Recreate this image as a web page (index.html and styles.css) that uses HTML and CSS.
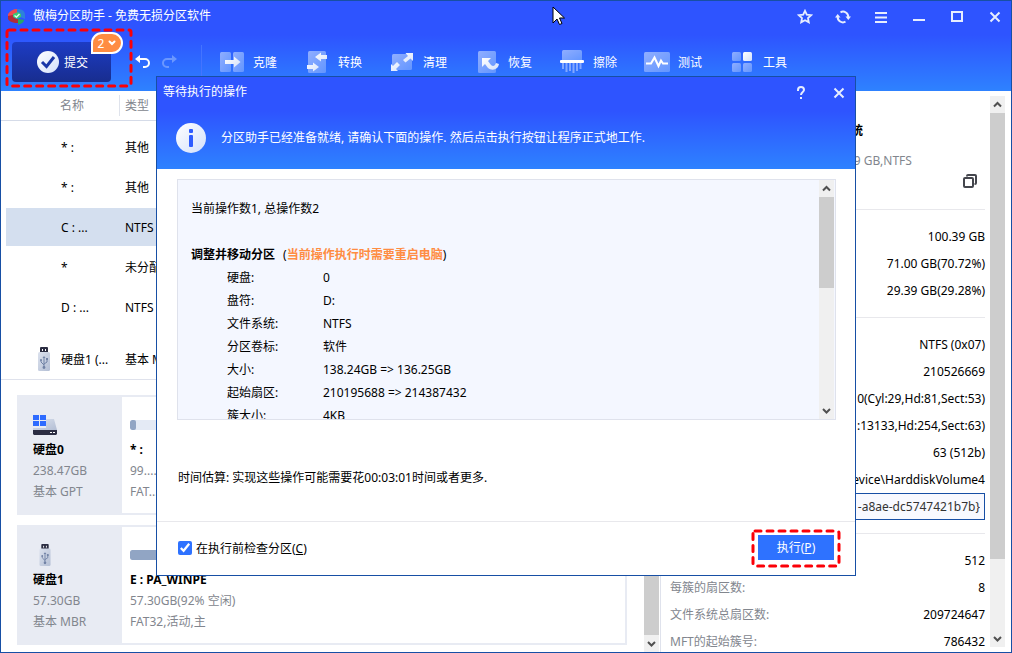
FILE: index.html
```html
<!DOCTYPE html>
<html lang="zh-CN">
<head>
<meta charset="utf-8">
<title>傲梅分区助手 - 免费无损分区软件</title>
<link rel="stylesheet" href="styles.css">
</head>
<body>
<svg class="defs" width="0" height="0" aria-hidden="true">
  <defs>
    <linearGradient id="pane" x1="0" y1="0" x2="1" y2="1"><stop offset="0" stop-color="#90aeff"/><stop offset="1" stop-color="#6295ff"/></linearGradient>
    <linearGradient id="shine" x1="0" y1="0" x2="1" y2="1"><stop offset="0" stop-color="#fff"/><stop offset="1" stop-color="#d3e0fb"/></linearGradient>
    <linearGradient id="stick" x1="0" y1="0" x2="1" y2="1"><stop offset="0" stop-color="#dce2ee"/><stop offset="1" stop-color="#b3bed4"/></linearGradient>
    <symbol id="usb" viewBox="0 0 14 26">
      <rect x="3" y="1" width="8" height="6" rx="1" fill="#2b2d42"/>
      <rect x="5" y="3" width="1" height="2" fill="#fff"/><rect x="8" y="3" width="1" height="2" fill="#fff"/>
      <rect x="1" y="6" width="12" height="19" rx="1.5" fill="url(#stick)"/>
      <path d="M7 11v10M4 14v2l3 3M10 13v3l-3 2" fill="none" stroke="#7182a5"/>
      <path d="M7 10l-1.5 2h3z" fill="#7182a5"/><circle cx="7" cy="21.500" r="1.400" fill="#7182a5"/><circle cx="4" cy="14" r="1" fill="#7182a5"/><rect x="9" y="12" width="2" height="2" fill="#7182a5"/>
    </symbol>
    <symbol id="close" viewBox="0 0 16 16"><path d="M3.500 3.500l9 9M12.500 3.500l-9 9" fill="none" stroke="#e6edff" stroke-width="2"/></symbol>
    <symbol id="up" viewBox="0 0 15 17"><path d="M4 10.500L7.500 7l3.500 3.500" fill="none" stroke="#505050" stroke-width="2"/></symbol>
    <symbol id="down" viewBox="0 0 15 17"><path d="M4 7l3.500 3.500L11 7" fill="none" stroke="#505050" stroke-width="2"/></symbol>
  </defs>
</svg>
<div class="window">
  <header class="head">
    <div class="titlebar">
      <svg class="logo" width="20" height="18" viewBox="0 0 20 18" aria-hidden="true">
        <path d="M1 9V6C3 3 6 1 10 1v4L7 7z" fill="#ef4a50"/><path d="M10 1c5 0 8 2 8 6v4l-5-2V6l-3-1z" fill="#2d80dc"/>
        <path d="M1 8l5-1c1 3 3 4 5 4v4C5 15 2 13 1 11z" fill="#b32b38"/>
        <path d="M11 11l6 1c0 2-3 4-6 5z" fill="#25a866"/><path d="M6 6l5-2 3 2v3l-4 2-4-2z" fill="#37c777"/><path d="M7.500 7.500l2 1.500 3-3" fill="none" stroke="#d9ffe9" stroke-width="1.500"/>
      </svg>
      <h1 class="title">傲梅分区助手 - 免费无损分区软件</h1>
      <div class="controls">
        <button class="control" aria-label="收藏"><svg width="16" height="16" viewBox="0 0 16 16"><path d="M8 1.800l1.800 3.900 4.300.5-3.100 2.900.8 4.300L8 11.300l-3.800 2.100.8-4.300-3.100-2.900 4.300-.5z" fill="none" stroke="#e6edff" stroke-width="1.800"/></svg></button>
        <button class="control" aria-label="刷新"><svg width="16" height="16" viewBox="0 0 16 16"><path d="M5.500 3.300a5.300 5.300 0 0 1 7.800 5M10.500 12.700a5.300 5.300 0 0 1-7.800-5" fill="none" stroke="#e6edff" stroke-width="2"/><path d="M10.500 7.500H16L13.300 11zM0 8.500h5.500L2.700 5z" fill="#e6edff"/></svg></button>
        <button class="control" aria-label="菜单"><svg width="16" height="16" viewBox="0 0 16 16"><path d="M2 4h12M2 8.500h12M2 13h12" stroke="#e6edff" stroke-width="2"/></svg></button>
        <button class="control" aria-label="最小化"><svg width="16" height="16" viewBox="0 0 16 16"><path d="M2 11h12" stroke="#e6edff" stroke-width="2"/></svg></button>
        <button class="control" aria-label="最大化"><svg width="16" height="16" viewBox="0 0 16 16"><rect x="3" y="3" width="10" height="9" fill="none" stroke="#e6edff" stroke-width="2"/></svg></button>
        <button class="control" aria-label="关闭"><svg width="16" height="16"><use href="#close"/></svg></button>
      </div>
    </div>
    <div class="toolbar">
      <div class="submit-wrap">
        <button class="submit"><svg width="24" height="24" viewBox="0 0 24 24" aria-hidden="true"><circle cx="12" cy="12" r="11" fill="url(#shine)"/><path d="M6 12l4.500 4.500L18 7" fill="none" stroke="#1a37a8" stroke-width="3"/></svg>提交</button>
        <button class="badge">2<svg width="8" height="6" viewBox="0 0 8 6" aria-hidden="true"><path d="M1.500 1.500L4 4l2.500-2.500" fill="none" stroke="#fff" stroke-width="2" stroke-linecap="round"/></svg></button>
        <svg class="mark mark-submit" width="128" height="60" aria-hidden="true"><rect x="2" y="2" width="124" height="56" rx="2"/></svg>
      </div>
      <button class="history" aria-label="撤销"><svg width="16" height="16" viewBox="0 0 16 16"><path d="M2 5h8a4 4 0 0 1 0 8H8" fill="none" stroke="#fff" stroke-width="2"/><path d="M0 5l5-4v8z" fill="#fff"/></svg></button>
      <button class="history" aria-label="重做" disabled><svg width="16" height="16" viewBox="0 0 16 16"><path d="M14 5H6a4 4 0 0 0 0 8h2" fill="none" stroke="#6a97ff" stroke-width="2"/><path d="M16 5l-5-4v8z" fill="#6a97ff"/></svg></button>
      <nav class="tools">
        <button class="tool"><svg width="26" height="26" viewBox="0 0 26 26"><rect x="1" y="3" width="11" height="20" rx="1.500" fill="url(#pane)"/><rect x="14" y="3" width="11" height="20" rx="1.500" fill="url(#pane)"/><path d="M6 11h9V7.500l6.500 5.500-6.500 5.500V15H6z" fill="url(#shine)"/></svg>克隆</button>
        <button class="tool"><svg width="26" height="26" viewBox="0 0 26 26"><rect x="4" y="2" width="18" height="22" rx="1.500" fill="url(#pane)"/><path d="M23 6h-6V3.500L11 8l6 4.500V10h6zM3 16h6v-2.500l6 4.500-6 4.500V20H3z" fill="url(#shine)"/></svg>转换</button>
        <button class="tool"><svg width="26" height="26" viewBox="0 0 26 26"><rect x="3" y="5" width="20" height="16" rx="1.500" fill="url(#pane)"/><path d="M24 4v8l-2.500-2.500-5 4-2.500-2.500 5-4L16.500 4zM2 22v-7l2 2 4-4 3 3-4 4 2 2z" fill="url(#shine)"/></svg>清理</button>
        <button class="tool"><svg width="26" height="26" viewBox="0 0 26 26"><rect x="4" y="2" width="18" height="22" rx="1.500" fill="url(#pane)"/><path d="M8 9h9l-3 3 3 4c2 2 4 1 5-2l3 1c-1 6-7 7-11 4l-3-4-3 3z" fill="url(#shine)"/></svg>恢复</button>
        <button class="tool"><svg width="26" height="26" viewBox="0 0 26 26"><rect x="3" y="1" width="20" height="11" rx="1.500" fill="url(#pane)"/><path d="M4 14v6M7.500 14v9M11 14v8M14.500 14v10M18 14v8M21.500 14v6" stroke="#82a7ff" stroke-width="2"/><rect x="1" y="11" width="24" height="3" rx="1" fill="#fff"/></svg>擦除</button>
        <button class="tool"><svg width="26" height="26" viewBox="0 0 26 26"><rect x="0" y="3" width="26" height="20" rx="1.500" fill="url(#pane)"/><path d="M2 14.500h5l3.500-6 4 8.500 2.500-5.500 2 3h5" fill="none" stroke="#fff" stroke-width="2"/></svg>测试</button>
        <button class="tool"><svg width="26" height="26" viewBox="0 0 26 26"><rect x="3" y="3" width="9" height="9" rx="1.500" fill="url(#pane)"/><rect x="14" y="3" width="9" height="9" rx="1.500" fill="url(#shine)"/><rect x="3" y="14" width="9" height="9" rx="1.500" fill="url(#pane)"/><rect x="14" y="14" width="9" height="9" rx="1.500" fill="url(#pane)"/></svg>工具</button>
      </nav>
    </div>
  </header>

  <main class="body">
    <section class="volumes">
      <div class="list">
        <table class="grid">
          <colgroup><col class="c-name"><col></colgroup>
          <thead><tr><th scope="col"><span class="th-name">名称</span></th><th scope="col">类型</th></tr></thead>
          <tbody>
            <tr><td>* :</td><td>其他</td></tr>
            <tr><td>* :</td><td>其他</td></tr>
            <tr class="selected"><td>C : ...</td><td>NTFS</td></tr>
            <tr><td>*</td><td>未分配</td></tr>
            <tr><td>D : ...</td><td>NTFS</td></tr>
          </tbody>
          <tbody class="disk-group"><tr><td><span class="disk-cell"><svg width="14" height="26" aria-hidden="true"><use href="#usb"/></svg>硬盘1 (...</span></td><td>基本 MBR</td></tr></tbody>
        </table>
      </div>
      <div class="disks">
        <div class="cards">
          <article class="card">
            <div class="disk">
              <svg class="disk-icon" width="24" height="24" viewBox="0 0 24 24" aria-hidden="true"><path d="M13 6h8l3 11H0v-2h13z" fill="url(#stick)"/><path d="M0 17h24v4l-1 1H1l-1-1z" fill="#2b2d42"/><path d="M17 19.500h2M20 19.500h2" stroke="#fff"/><path d="M0 2h6v5H0zM7 2h6v5H7zM0 8h6v5H0zM7 8h6v5H7z" fill="#2e6bff"/></svg>
              <h2 class="name">硬盘0</h2><p>238.47GB</p><p>基本 GPT</p>
            </div>
            <div class="part part-small"><div class="bar"><div class="used" style="width:22%"></div></div><h3 class="name">* :</h3><p>99....</p><p>FAT...</p></div>
          </article>
          <article class="card">
            <div class="disk">
              <svg class="disk-icon usb" width="14" height="26" aria-hidden="true"><use href="#usb"/></svg>
              <h2 class="name">硬盘1</h2><p>57.30GB</p><p>基本 MBR</p>
            </div>
            <div class="part"><div class="bar"><div class="used" style="width:8%"></div></div><h3 class="name">E : PA_WINPE</h3><p>57.30GB(92% 空闲)</p><p>FAT32,活动,主</p></div>
          </article>
        </div>
        <div class="scroll"><svg width="15" height="17"><use href="#up"/></svg><div class="thumb thumb-full"></div><svg width="15" height="17"><use href="#down"/></svg></div>
      </div>
    </section>

    <aside class="side">
      <div class="details">
        <div class="summary"><strong>系统</strong><span>100.39 GB,NTFS</span></div>
        <div class="copy-row"><button class="copy" aria-label="复制"><svg width="16" height="16" viewBox="0 0 16 16"><rect x="2" y="5" width="9" height="9" rx="1" fill="none" stroke="#44464d" stroke-width="2"/><path d="M5 3.500V3a1 1 0 0 1 1-1h7a1 1 0 0 1 1 1v7a1 1 0 0 1-1 1h-.5" fill="none" stroke="#44464d" stroke-width="2"/></svg></button></div>
        <hr>
        <p class="value">100.39 GB</p>
        <p class="value">71.00 GB(70.72%)</p>
        <p class="value">29.39 GB(29.28%)</p>
        <hr>
        <p class="value">NTFS (0x07)</p>
        <p class="value">210526669</p>
        <p class="value">0(Cyl:29,Hd:81,Sect:53)</p>
        <p class="value">:13133,Hd:254,Sect:63)</p>
        <p class="value">63 (512b)</p>
        <p class="value">Device\HarddiskVolume4</p>
        <input class="guid" type="text" aria-label="GUID" value="-a8ae-dc5747421b7b}" readonly>
        <hr>
        <p class="value">512</p>
        <p class="value"><span>每簇的扇区数:</span>8</p>
        <p class="value"><span>文件系统总扇区数:</span>209724647</p>
        <p class="value"><span>MFT的起始簇号:</span>786432</p>
      </div>
      <div class="scroll scroll-side"><svg width="15" height="17"><use href="#up"/></svg><div class="thumb thumb-side"></div><svg class="last" width="15" height="17"><use href="#down"/></svg></div>
    </aside>
  </main>

  <div class="overlay">
    <section class="dialog" role="dialog" aria-labelledby="dlg-title">
      <header class="dialog-head">
        <div class="dialog-bar">
          <h2 id="dlg-title" class="title">等待执行的操作</h2>
          <button class="control help" aria-label="帮助"><svg width="16" height="16" viewBox="0 0 16 16"><path d="M5 6V5a3 3 0 0 1 6 0c0 2-3 2-3 5" fill="none" stroke="#e6edff" stroke-width="2"/><rect x="7" y="12" width="2" height="2" fill="#e6edff"/></svg></button>
          <button class="control" aria-label="关闭"><svg width="16" height="16"><use href="#close"/></svg></button>
        </div>
        <div class="notice"><svg width="30" height="30" viewBox="0 0 30 30" aria-hidden="true"><circle cx="15" cy="15" r="15" fill="url(#shine)"/><rect x="13" y="6" width="4" height="4" rx="1" fill="#2e5cff"/><rect x="13" y="12" width="4" height="12" rx="1" fill="#2e5cff"/></svg><p>分区助手已经准备就绪, 请确认下面的操作. 然后点击执行按钮让程序正式地工作.</p></div>
      </header>
      <div class="dialog-body">
        <div class="ops">
          <div class="ops-text">
            <p>当前操作数1, 总操作数2</p>
            <p class="op-title"><strong>调整并移动分区</strong><span>(<b>当前操作执行时需要重启电脑</b>)</span></p>
            <dl class="fields">
              <dt>硬盘:</dt><dd>0</dd>
              <dt>盘符:</dt><dd>D:</dd>
              <dt>文件系统:</dt><dd>NTFS</dd>
              <dt>分区卷标:</dt><dd>软件</dd>
              <dt>大小:</dt><dd>138.24GB =&gt; 136.25GB</dd>
              <dt>起始扇区:</dt><dd>210195688 =&gt; 214387432</dd>
              <dt>簇大小:</dt><dd>4KB</dd>
            </dl>
          </div>
          <div class="scroll"><svg width="15" height="17"><use href="#up"/></svg><div class="thumb thumb-ops"></div><svg class="last" width="15" height="17"><use href="#down"/></svg></div>
        </div>
        <p class="estimate">时间估算: 实现这些操作可能需要花00:03:01时间或者更多.</p>
      </div>
      <footer class="dialog-foot">
        <label class="check"><input type="checkbox" checked><span>在执行前检查分区(<u>C</u>)</span></label>
        <div class="run-wrap">
          <button class="run">执行(<u>P</u>)</button>
          <svg class="mark mark-run" width="90" height="40" aria-hidden="true"><rect x="2" y="2" width="86" height="35" rx="2"/></svg>
        </div>
      </footer>
    </section>
  </div>

  <svg class="cursor" width="14" height="20" viewBox="0 0 14 20" aria-hidden="true"><path d="M1 1v16l4-4 2.500 5.500 2.500-1-2.500-5.500h5z" fill="#fff" stroke="#000"/></svg>
</div>
</body>
</html>
```

FILE: styles.css
```css
* { box-sizing: border-box; }
body {
  margin: 0;
  font: 12px/21px "Noto Sans", "Noto Sans CJK SC", sans-serif;
  color: #000;
}
h1, h2, h3, p, dl, dd { margin: 0; font-size: 12px; font-weight: 400; }
button { border: 0; padding: 0; background: none; font: inherit; color: inherit; }
svg { display: block; flex: none; }
.defs { position: absolute; }

.window {
  position: relative;
  display: flex;
  flex-direction: column;
  height: 100vh;
  border: 1px solid #174fa5;
  background: #fff;
  overflow: hidden;
}

/* header */
.head {
  height: 90px;
  flex: none;
  background: linear-gradient(#2e54ff 34px, #2e82ff);
  color: #fff;
}
.titlebar { display: flex; align-items: center; height: 32px; padding-left: 6px; }
.title { margin-left: 6px; line-height: 30px; }
.titlebar .title { align-self: flex-start; }
.controls { display: flex; margin: 0 -3px 0 auto; }
.control { display: flex; align-items: center; justify-content: center; width: 38px; height: 32px; }
.toolbar { display: flex; align-items: center; height: 58px; padding-left: 11px; }
.submit-wrap { position: relative; margin-right: 24px; }
.submit {
  display: flex;
  align-items: center;
  gap: 4px;
  width: 99px;
  height: 40px;
  padding-left: 24px;
  border-radius: 4px;
  background: linear-gradient(#1d3cc4, #182d8f);
}
.badge {
  position: absolute;
  top: -10px;
  right: -12px;
  display: flex;
  align-items: center;
  justify-content: center;
  gap: 4px;
  width: 32px;
  height: 22px;
  border: 2px solid #fff;
  border-radius: 11px 11px 11px 0;
  background: #ff8c42;
}
.mark { position: absolute; }
.mark rect { fill: none; stroke: #fb0007; stroke-width: 3; stroke-dasharray: 6 6; stroke-linecap: round; }
.mark-submit { top: -14px; left: -7px; }
.mark-run { top: -6px; left: -7px; }
.history { width: 16px; margin-right: 10px; }
.tools { display: flex; align-items: center; height: 34px; margin-left: 14px; padding-left: 17px; border-left: 1px solid #4474ff; }
.tool { display: flex; align-items: center; gap: 8px; width: 85px; }

/* body */
.body { display: flex; flex: 1; min-height: 0; }
.volumes { display: flex; flex-direction: column; flex: 1; min-width: 0; }
.list { border-bottom: 1px solid #dfe2ec; }
.grid { width: 100%; table-layout: fixed; border-collapse: collapse; text-align: left; }
.c-name { width: 119px; }
.grid th { height: 29px; padding: 0 0 0 5px; border-bottom: 1px solid #d5dbe8; font-weight: 400; color: #82868e; }
.th-name { display: block; padding-left: 54px; border-right: 1px solid #dfe3ec; }
.grid td { height: 40px; padding: 0 0 0 5px; white-space: nowrap; }
.grid td:first-child { padding-left: 60px; }
.grid tbody:first-of-type::before { content: ""; display: table-row; height: 7px; }
.disk-group::before { content: ""; display: table-row; height: 12px; }
.selected { background: linear-gradient(#d4dfef, #d4dfef) 5px 1px / 100% 38px no-repeat; }
.grid .disk-group td:first-child { padding-left: 36px; }
.disk-cell { display: flex; align-items: center; gap: 10px; }

.disks { display: flex; flex: 1; min-height: 0; }
.cards { flex: 1; display: flex; flex-direction: column; gap: 10px; padding: 15px 17px 0 16px; min-width: 0; }
.card { display: flex; height: 120px; flex: none; border: 2px solid #e8ebf3; color: #82868e; }
.disk { width: 103px; padding: 16px 0 0 14px; background: #e8ebf3; }
.disk-icon { height: 24px; margin-bottom: 2px; }
.disk-icon.usb { margin-left: 5px; }
.name { font-weight: 700; color: #000; }
.part { flex: 1; padding: 23px 8px 0; white-space: nowrap; }
.part-small { flex: none; width: 44px; }
.bar { height: 10px; margin-bottom: 9px; border-radius: 2px; background: #e4eaf5; overflow: hidden; }
.used { height: 10px; border-radius: 2px; background: #91a5c4; }

/* scrollbars */
.scroll { display: flex; flex-direction: column; flex: none; width: 15px; background: #f0f0f0; }
.scroll-side { margin: 5px 6px 5px 0; }
.thumb { background: #cdcdcd; }
.thumb-full { flex: 1; }
.thumb-side { height: 81%; }
.thumb-ops { height: 91px; }
.last { margin-top: auto; }

/* details */
.side { display: flex; width: 351px; border-left: 1px solid #dfe2ec; margin-left: 1px; }
.details { flex: 1; padding: 32px 5px 0 9px; overflow: hidden; }
.summary {
  display: flex;
  flex-direction: column;
  align-items: flex-start;
  gap: 15px;
  padding-left: 153px;
  line-height: 15px;
  color: #82868e;
}
.summary strong { padding-left: 16px; color: #000; }
.copy-row { display: flex; align-items: flex-start; justify-content: flex-end; height: 28px; padding: 5px 7px 0 0; }
hr { height: 1px; margin: 13px 0; border: 0; background: #e8e8ec; }
.value { line-height: 27px; text-align: right; }
.value span { float: left; color: #82868e; }
.guid {
  display: block;
  width: 100%;
  height: 27px;
  padding: 0 4px;
  border: 1px solid #174fa5;
  background: #f8f9ff;
  font: inherit;
  color: #333;
  text-align: right;
}

/* dialog */
.overlay { position: absolute; inset: 0; display: grid; place-items: center; padding-bottom: 2px; }
.dialog { width: 700px; border: 1px solid #174fa5; background: #fff; }
.dialog-head { height: 92px; background: linear-gradient(#2e54ff 34px, #2e82ff); color: #fff; }
.dialog-bar { display: flex; height: 32px; margin-right: -3px; }
.help { margin-left: auto; }
.notice { display: flex; align-items: center; gap: 15px; height: 58px; padding-left: 19px; }
.dialog-body { padding: 10px 19px 0 20px; height: 352px; }
.ops { display: flex; height: 241px; padding-right: 1px; border: 1px solid #dfe2ec; background: #f4f7ff; line-height: 23px; overflow: hidden; }
.ops-text { flex: 1; padding: 17px 13px 0; }
.op-title { display: flex; gap: 8px; margin-top: 23px; }
.op-title b { font-weight: 700; color: #ff8c42; }
.fields { display: grid; grid-template-columns: 96px 1fr; padding-left: 36px; }
.estimate { padding: 47px 0 0 1px; }
.dialog-foot { display: flex; align-items: center; justify-content: space-between; height: 54px; padding: 0 21px; border-top: 1px solid #e8e8ec; }
.check { display: flex; align-items: center; gap: 4px; }
.check input { width: 14px; height: 14px; margin: 0; accent-color: #2e72ff; }
.run-wrap { position: relative; margin-bottom: 2px; }
.run { display: block; width: 76px; height: 25px; background: #2e72ff; color: #fff; }

.cursor { position: absolute; top: 5px; left: 551px; }
```
